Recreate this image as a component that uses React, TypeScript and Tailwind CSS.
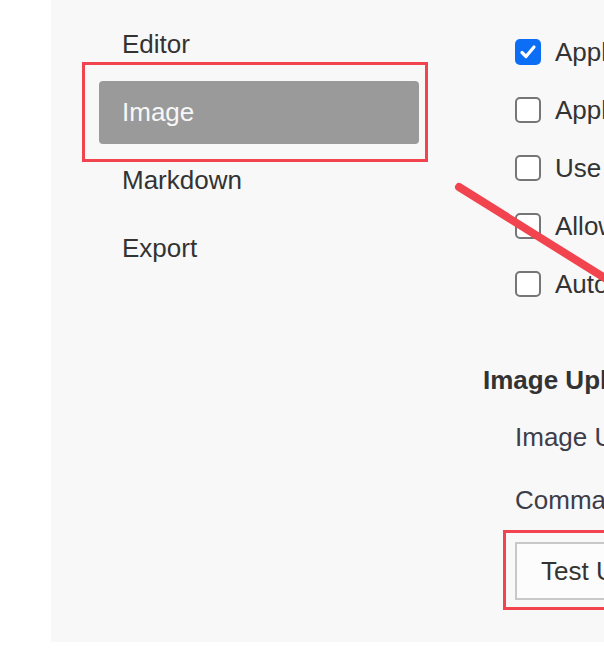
import React from "react";

const navItems = ["Editor", "Image", "Markdown", "Export"];

const options = [
  { label: "Apply above rules to local images", checked: true },
  { label: "Apply above rules to online images", checked: false },
  { label: "Use relative path if possible", checked: false },
  { label: "Allow auto-escape for image URL", checked: false },
  { label: "Auto add image syntax when paste", checked: false },
];

const Checkbox: React.FC<{ checked: boolean }> = ({ checked }) =>
  checked ? (
    <span className="flex h-[26px] w-[26px] shrink-0 items-center justify-center rounded-[5px] bg-[#0b6ef5]">
      <svg width="20" height="20" viewBox="0 0 20 20" fill="none">
        <path d="M4 10.5 L8 14.5 L16 5" stroke="white" strokeWidth="3.2" strokeLinecap="round" strokeLinejoin="round" />
      </svg>
    </span>
  ) : (
    <span className="h-[26px] w-[26px] shrink-0 rounded-[5px] border-2 border-[#767676] bg-white"></span>
  );

export default function App() {
  return (
    <div
      className="relative h-[658px] w-[604px] overflow-hidden bg-white text-[26px] text-[#333]"
      style={{ fontFamily: "'Liberation Sans', Arial, sans-serif" }}
    >
      <div className="ml-[51px] flex h-[642px] bg-[#f8f8f8]">
        {/* sidebar */}
        <div className="w-[432px] shrink-0 pl-[48px] pt-[13px]">
          {navItems.map((item) => (
            <div
              key={item}
              className={`mb-[5px] flex h-[63px] w-[320px] items-center rounded-[4px] pl-[23px] ${
                item === "Image" ? "bg-[#9a9a9a] text-[#f7f7f7]" : ""
              }`}
            >
              {item}
            </div>
          ))}
        </div>

        {/* content */}
        <div className="flex-1 whitespace-nowrap pt-[23px]">
          {options.map((o) => (
            <div key={o.label} className="flex h-[58px] items-center gap-[14px] pl-[32px]">
              <Checkbox checked={o.checked} />
              <span>{o.label}</span>
            </div>
          ))}

          <div className="mt-[52px] h-[30px] leading-[30px] font-bold">Image Uploader</div>
          <div className="mt-[27px] h-[30px] pl-[32px] leading-[30px] text-[#3d3d4a]">Image Uploader</div>
          <div className="mt-[33px] h-[30px] pl-[32px] leading-[30px] text-[#3d3d4a]">Command</div>
          <div className="mt-[27px] pl-[32px]">
            <div className="flex h-[58px] w-[300px] items-center border-2 border-[#c8c8c8] bg-[#fcfcfc] pl-[24px]">
              Test Uploader
            </div>
          </div>
        </div>
      </div>

      {/* annotations */}
      <div className="pointer-events-none absolute left-[82px] top-[62px] h-[100px] w-[346px] border-[3px] border-[#f2444f]"></div>
      <div className="pointer-events-none absolute left-[503px] top-[530px] h-[80px] w-[140px] border-[3px] border-[#f2444f]"></div>
      <svg className="pointer-events-none absolute left-0 top-0" width="604" height="658">
        <line x1="459" y1="187" x2="640" y2="300" stroke="#f2444f" strokeWidth="8" strokeLinecap="round" />
      </svg>
    </div>
  );
}
